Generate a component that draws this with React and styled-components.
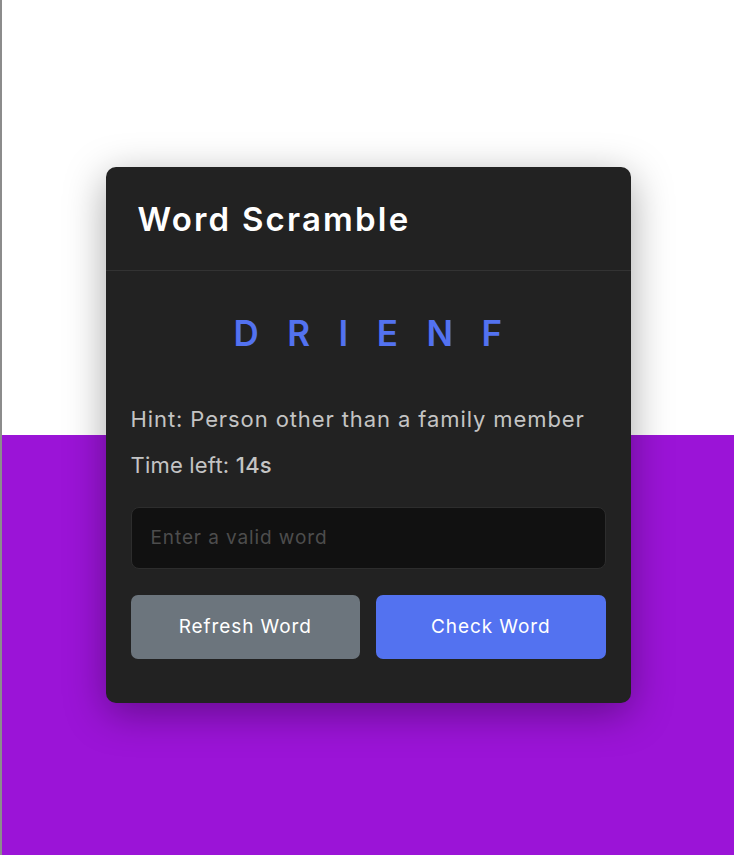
import React from 'react';
import styled, { createGlobalStyle } from 'styled-components';

const GlobalStyle = createGlobalStyle`
	html, body {
		margin: 0;
		padding: 0;
		overflow: hidden;
	}
	* {
		box-sizing: border-box;
	}
	body {
		font-family: 'Inter', 'Open Sans', sans-serif;
	}
`;

const Stage = styled.div`
	height: 100vh;
	padding-top: 14px;
	display: flex;
	align-items: center;
	justify-content: center;
	border-left: 2px solid #8c8c8c;
	background: linear-gradient(to bottom, #ffffff 0, #ffffff 435px, #9b14d7 435px);
`;

const Card = styled.div`
	width: 525px;
	background: #222222;
	border-radius: 10px;
	box-shadow: 0 10px 40px rgba(0, 0, 0, 0.35);
`;

const Header = styled.header`
	padding: 33px 32px 32px;
	border-bottom: 1px solid #333333;

	h2 {
		margin: 0;
		font-size: 33px;
		line-height: 38px;
		font-weight: 600;
		letter-spacing: 2.2px;
		color: #ffffff;
	}
`;

const Content = styled.section`
	padding: 40px 25px 44px;
`;

const Word = styled.p`
	margin: 0 -28px 49px 0;
	text-align: center;
	font-size: 35px;
	line-height: 44px;
	font-weight: 600;
	letter-spacing: 28.5px;
	color: #5372f0;
`;

const Detail = styled.p`
	margin: 0 0 ${props => props.gap}px;
	font-size: 22px;
	line-height: 30px;
	letter-spacing: ${props => props.tracking}px;
	color: #c4c4c4;

	b {
		font-weight: 500;
	}
`;

const Input = styled.input`
	display: block;
	width: 100%;
	height: 62px;
	margin-top: 27px;
	padding: 0 19px;
	background: #111111;
	border: 1px solid #2d2d2d;
	border-radius: 8px;
	outline: none;
	font-family: inherit;
	font-size: 19px;
	letter-spacing: 0.9px;
	color: #dddddd;

	&::placeholder {
		color: #4d4d4d;
	}
`;

const Buttons = styled.div`
	display: grid;
	grid-template-columns: 1fr 1fr;
	gap: 16px;
	margin-top: 26px;
`;

const Button = styled.button`
	height: 64px;
	border: 0;
	border-radius: 7px;
	font-family: inherit;
	font-size: 19px;
	letter-spacing: 0.9px;
	color: #ffffff;
	cursor: pointer;
	background: ${props => (props.primary ? '#5372f0' : '#6c757d')};
`;

export default function App() {
	return (
		<>
			<GlobalStyle />
			<Stage>
				<Card>
					<Header>
						<h2>Word Scramble</h2>
					</Header>
					<Content>
						<Word>DRIENF</Word>
						<Detail gap={16} tracking={0.9}>
							Hint: Person other than a family member
						</Detail>
						<Detail gap={0} tracking={0.2}>
							Time left: <b>14s</b>
						</Detail>
						<Input type='text' placeholder='Enter a valid word' />
						<Buttons>
							<Button>Refresh Word</Button>
							<Button primary>Check Word</Button>
						</Buttons>
					</Content>
				</Card>
			</Stage>
		</>
	);
}
